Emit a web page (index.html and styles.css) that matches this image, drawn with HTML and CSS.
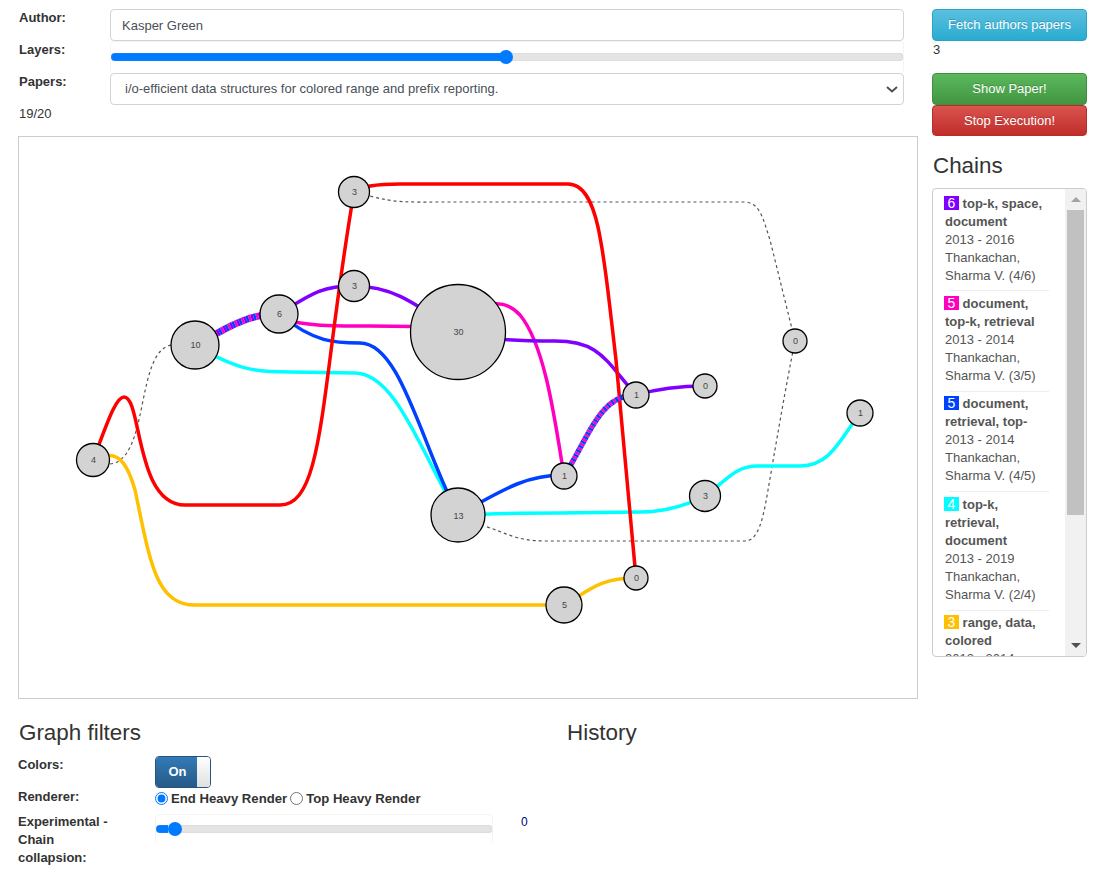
FILE: index.html
```html
<!DOCTYPE html>
<html lang="en">
<head>
    <meta charset="UTF-8">
    <title>Author chains</title>
    <link rel="stylesheet" href="styles.css">
</head>
<body>
    <div class="layout">
        <div class="main">
            <form class="top-form">
                <label>Author:</label>
                <input class="field" type="text" value="Kasper Green">
                <label>Layers:</label>
                <div class="slider-box"><input class="slider" type="range" min="0" max="100" step="0.1" value="49.9" style="--fill:49.9%"></div>
                <label>Papers:</label>
                <select class="field picker">
                    <option>i/o-efficient data structures for colored range and prefix reporting.</option>
                </select>
            </form>
            <div class="paper-count">19/20</div>
            <div class="graph">
                <svg viewBox="19 137 898 561" width="898" height="561">
                    <g class="edges">
                        <path class="ghost" d="M110,464 C150,460 135,350 172,345"/>
                        <path class="ghost" d="M370,196 C395,203 410,202 440,202 L746,202 C760,204 763,218 770,240 L795,341"/>
                        <path class="ghost" d="M795,341 C785,390 775,450 768,490 C763,520 758,541 745,541 L545,541 C515,541 505,532 484,526"/>

                        <path class="e-cyan" d="M195,345 C240,372 260,372 290,372 L355,373 C395,373 420,450 458,515"/>
                        <path class="e-cyan" d="M458,515 C500,513 520,513 560,513 L640,512 C665,512 685,506 705,496 C725,482 735,466 757,466 L800,466 C830,466 840,440 860,413"/>
                        <path class="e-blue" d="M279,314 C315,343 335,343 360,343 C400,343 420,440 458,515"/>
                        <path class="e-blue" d="M458,515 C510,485 530,475 564,475"/>
                        <path class="e-magenta" d="M279,319 C315,327 335,326 370,326 L458,327"/>
                        <path class="e-magenta" d="M458,312 C490,303 505,298 520,315 C545,345 555,420 564,476"/>
                        <path class="e-purple" d="M279,314 C310,295 320,286 354,286 C390,286 410,300 458,332"/>
                        <path class="e-purple" d="M458,332 C490,340 520,341 555,341 C600,341 605,360 636,395 C660,388 680,386 705,386"/>
                        <path class="e-yellow" d="M93,457 C115,452 125,455 135,490 C150,560 155,605 195,605 L564,605 C590,590 600,578 636,578"/>
                        <path class="e-red" d="M93,460 C105,430 115,397 124,397 C142,397 135,505 185,505 L280,505 C325,505 320,390 354,192 C360,187 375,184 400,184 L568,184 C585,184 593,205 598,227 C604,255 608,290 616,360 L636,578"/>

                        <g class="thick">
                            <path class="e-magenta" stroke-dasharray="2.5 5" d="M195,345 C225,330 245,314 279,314"/>
                            <path class="e-blue" stroke-dasharray="2.5 5" stroke-dashoffset="2.5" d="M195,345 C225,330 245,314 279,314"/>
                            <path class="e-purple" stroke-dasharray="2.5 5" stroke-dashoffset="5" d="M195,345 C225,330 245,314 279,314"/>
                        </g>
                        <g class="medium">
                            <path class="e-magenta" stroke-dasharray="2.5 2.5" d="M564,476 C590,435 600,395 636,395"/>
                            <path class="e-blue" stroke-dasharray="2.5 2.5" stroke-dashoffset="2.5" d="M564,476 C590,435 600,395 636,395"/>
                        </g>
                    </g>
                    <g class="nodes">
                        <circle cx="354" cy="192" r="15.5"/><text x="354.5" y="195">3</text>
                        <circle cx="354" cy="286" r="15.5"/><text x="354.5" y="289">3</text>
                        <circle cx="279" cy="314" r="19"/><text x="279.5" y="317">6</text>
                        <circle cx="195" cy="345" r="24"/><text x="195.5" y="348">10</text>
                        <circle cx="458" cy="332" r="47.5"/><text x="458.5" y="335">30</text>
                        <circle cx="93" cy="460" r="16.5"/><text x="93.5" y="463">4</text>
                        <circle cx="564" cy="476" r="13"/><text x="564.5" y="479">1</text>
                        <circle cx="458" cy="515" r="27"/><text x="458.5" y="519">13</text>
                        <circle cx="636" cy="395" r="13"/><text x="636.5" y="398">1</text>
                        <circle cx="705" cy="386" r="12"/><text x="705.5" y="389">0</text>
                        <circle cx="795" cy="341" r="12"/><text x="795.5" y="344">0</text>
                        <circle cx="860" cy="413" r="13"/><text x="860.5" y="416">1</text>
                        <circle cx="705" cy="496" r="15.5"/><text x="705.5" y="499">3</text>
                        <circle cx="564" cy="605" r="18"/><text x="564.5" y="608">5</text>
                        <circle cx="636" cy="578" r="12"/><text x="636.5" y="581">0</text>
                    </g>
                </svg>
            </div>
            <div class="below">
                <section>
                    <h3 class="filters-title">Graph filters</h3>
                    <div class="filters">
                        <label>Colors:</label>
                        <div class="toggle">
                            <span class="toggle-on">On</span>
                            <span class="toggle-knob"></span>
                        </div>
                        <label class="renderer-label">Renderer:</label>
                        <div class="radios">
                            <label><input type="radio" name="renderer" checked>End Heavy Render</label>
                            <label><input type="radio" name="renderer">Top Heavy Render</label>
                        </div>
                        <label>Experimental - Chain collapsion:</label>
                        <div class="collapse-row">
                            <div class="slider-box"><input class="slider" type="range" min="0" max="100" step="0.1" value="3.7" style="--fill:3.7%"></div>
                            <span class="collapse-value">0</span>
                        </div>
                    </div>
                </section>
                <section>
                    <h3>History</h3>
                </section>
            </div>
        </div>
        <aside class="side">
            <button class="btn btn-info">Fetch authors papers</button>
            <div class="fetch-count">3</div>
            <button class="btn btn-success">Show Paper!</button>
            <button class="btn btn-danger">Stop Execution!</button>
            <h3 class="chains-title">Chains</h3>
            <div class="chains">
                <ul class="chain-list">
                    <li><b><span class="badge purple">6</span> top-k, space, document</b><br>2013 - 2016<br>Thankachan, Sharma V. (4/6)</li>
                    <li><b><span class="badge magenta">5</span> document, top-k, retrieval</b><br>2013 - 2014<br>Thankachan, Sharma V. (3/5)</li>
                    <li><b><span class="badge blue">5</span> document, retrieval, top-</b><br>2013 - 2014<br>Thankachan, Sharma V. (4/5)</li>
                    <li><b><span class="badge cyan">4</span> top-k, retrieval, document</b><br>2013 - 2019<br>Thankachan, Sharma V. (2/4)</li>
                    <li><b><span class="badge yellow">3</span> range, data, colored</b><br>2013 - 2014</li>
                </ul>
                <div class="scrollbar">
                    <span class="arrow-up"></span>
                    <span class="scroll-thumb"></span>
                    <span class="arrow-down"></span>
                </div>
            </div>
        </aside>
    </div>
</body>
</html>
```

FILE: styles.css
```css
* {
    box-sizing: border-box;
}
body {
    margin: 0;
    background: #fff;
    color: #333;
    font-family: "Liberation Sans", Arial, sans-serif;
    font-size: 13px;
    line-height: 18px;
}
h3 {
    margin: 0;
    font-size: 22.4px;
    font-weight: 400;
    line-height: 26px;
}
label {
    font-weight: 700;
}
.layout {
    display: grid;
    grid-template-columns: 900px 155px;
    column-gap: 14px;
    padding: 9px 0 0 18px;
}
.top-form {
    display: grid;
    grid-template-columns: 92px 794px;
    grid-auto-rows: 32px;
}
.top-form label {
    margin-left: 1px;
}
.field {
    height: 32px;
    width: 100%;
    padding: 0 11px;
    border: 1px solid #ced4da;
    border-radius: 4px;
    background: #fff;
    color: #495057;
    font: 13px "Liberation Sans", Arial, sans-serif;
}
.picker {
    appearance: none;
    padding: 0 11px 2px 14px;
    background: #fff url("data:image/svg+xml,%3Csvg xmlns='http://www.w3.org/2000/svg' width='12' height='8'%3E%3Cpath d='M1 2 6 6.5 11 2' fill='none' stroke='%23495057' stroke-width='2'/%3E%3C/svg%3E") no-repeat right 5px center;
}
.slider-box {
    height: 32px;
    display: flex;
    align-items: center;
    padding-bottom: 1px;
    border: 1px solid #f4f4f4;
    border-bottom: 0;
    border-radius: 4px;
}
.slider {
    appearance: none;
    display: block;
    width: 100%;
    height: 14px;
    margin: 0;
    background: transparent;
}
.slider::-webkit-slider-runnable-track {
    height: 8px;
    border-radius: 4px;
    background: linear-gradient(90deg, #007bff var(--fill), #e4e4e4 var(--fill));
    box-shadow: inset 0 0 1px #aaa;
}
.slider::-webkit-slider-thumb {
    appearance: none;
    width: 14px;
    height: 14px;
    margin-top: -3px;
    border-radius: 50%;
    background: #007bff;
}
.paper-count {
    margin: 0 0 14px 1px;
    height: 17px;
}
.graph {
    width: 900px;
    height: 563px;
    border: 1px solid #ccc;
}
.graph svg {
    display: block;
}
.edges path {
    fill: none;
    stroke-width: 3.5;
}
.edges .thick path {
    stroke-width: 7;
}
.edges .medium path {
    stroke-width: 5.5;
}
.edges .ghost {
    stroke: #555;
    stroke-width: 1.2;
    stroke-dasharray: 3 3;
}
.e-red { stroke: #ff0000; }
.e-yellow { stroke: #ffc000; }
.e-purple { stroke: #8000ff; }
.e-magenta { stroke: #ff00c0; }
.e-blue { stroke: #0040ff; }
.e-cyan { stroke: #00ffff; }
.nodes circle {
    fill: #d3d3d3;
    stroke: #000;
    stroke-width: 1.3;
}
.nodes text {
    fill: #444;
    font: 9px "Liberation Sans", Arial, sans-serif;
    text-anchor: middle;
}
.below {
    display: grid;
    grid-template-columns: 549px 1fr;
    padding-top: 21px;
}
.below h3 {
    margin-bottom: 9px;
}
.below .filters-title {
    margin-left: 1px;
}
.filters {
    display: grid;
    grid-template-columns: 137px 373px;
    grid-template-rows: 33px 24px auto;
    width: 510px;
}
.filters > label {
    width: 100px;
    margin-top: 1px;
}
.filters > .renderer-label {
    margin-top: 0;
}
.toggle {
    display: flex;
    width: 56px;
    height: 32px;
    margin-top: 1px;
    border: 1px solid #245580;
    border-radius: 4px;
    overflow: hidden;
}
.toggle-on {
    flex: 1;
    padding-top: 6px;
    background: linear-gradient(#337ab7, #265a88);
    color: #fff;
    font-weight: 700;
    text-align: center;
    text-indent: 2px;
}
.toggle-knob {
    width: 13px;
    background: linear-gradient(#fff, #e0e0e0);
}
.radios {
    display: flex;
    align-items: center;
    height: 21px;
    white-space: nowrap;
    font-size: 13.15px;
}
.radios label {
    display: flex;
    align-items: center;
    margin-right: 3px;
}
.radios input {
    width: 13px;
    height: 13px;
    margin: 0 3px 0 0;
}
.collapse-row {
    display: flex;
    align-items: flex-start;
    margin-top: 2px;
}
.collapse-row .slider-box {
    width: 338px;
    height: 30px;
    flex: none;
}
.collapse-value {
    margin: -1px 0 0 28px;
    color: #000080;
    font-size: 12px;
}
.btn {
    display: block;
    width: 155px;
    height: 32px;
    padding: 0 0 2px;
    border: 1px solid transparent;
    border-radius: 4px;
    color: #fff;
    font: 13px "Liberation Sans", Arial, sans-serif;
    text-shadow: 0 -1px 0 rgba(0, 0, 0, 0.2);
}
.btn-info {
    background: linear-gradient(#5bc0de, #2aabd2);
    border-color: #28a4c9;
}
.btn-success {
    height: 32px;
    background: linear-gradient(#5cb85c, #419641);
    border-color: #3e8f3e;
}
.btn-danger {
    height: 31px;
    padding-bottom: 1px;
    background: linear-gradient(#d9534f, #c12e2a);
    border-color: #b92c28;
}
.fetch-count {
    height: 32px;
    margin-left: 1px;
}
.chains-title {
    margin: 17px 0 9px 1px;
}
.chains {
    display: flex;
    height: 469px;
    border: 1px solid #ccc;
    border-radius: 4px;
    overflow: hidden;
}
.chain-list {
    flex: 1;
    margin: 0;
    padding: 0 0 0 12px;
    list-style: none;
    color: #555;
    overflow: hidden;
}
.chain-list li {
    position: relative;
    width: 105px;
    padding: 4.5px 0 6px;
}
.chain-list li:first-child {
    padding: 6px 0 5px;
}
.chain-list li + li::before {
    content: "";
    position: absolute;
    top: 0;
    left: 4px;
    width: 100px;
    height: 1px;
    background: #eee;
}
.badge {
    display: inline-block;
    width: 15px;
    height: 14px;
    margin-left: -1px;
    color: #fff;
    font-weight: 400;
    font-size: 14px;
    line-height: 14px;
    text-align: center;
}
.purple { background: #8000ff; }
.magenta { background: #ff00c0; }
.blue { background: #0040ff; }
.cyan { background: #00ffff; }
.yellow { background: #ffc000; }
.scrollbar {
    display: flex;
    flex-direction: column;
    align-items: center;
    width: 21px;
    background: #f1f1f1;
}
.arrow-up {
    margin: 8px 0 8px;
    border: 5px solid transparent;
    border-top: 0;
    border-bottom: 5px solid #a3a3a3;
}
.scroll-thumb {
    width: 17px;
    height: 305px;
    background: #c1c1c1;
}
.arrow-down {
    margin-top: auto;
    margin-bottom: 8px;
    border: 5px solid transparent;
    border-bottom: 0;
    border-top: 5px solid #505050;
}
```
